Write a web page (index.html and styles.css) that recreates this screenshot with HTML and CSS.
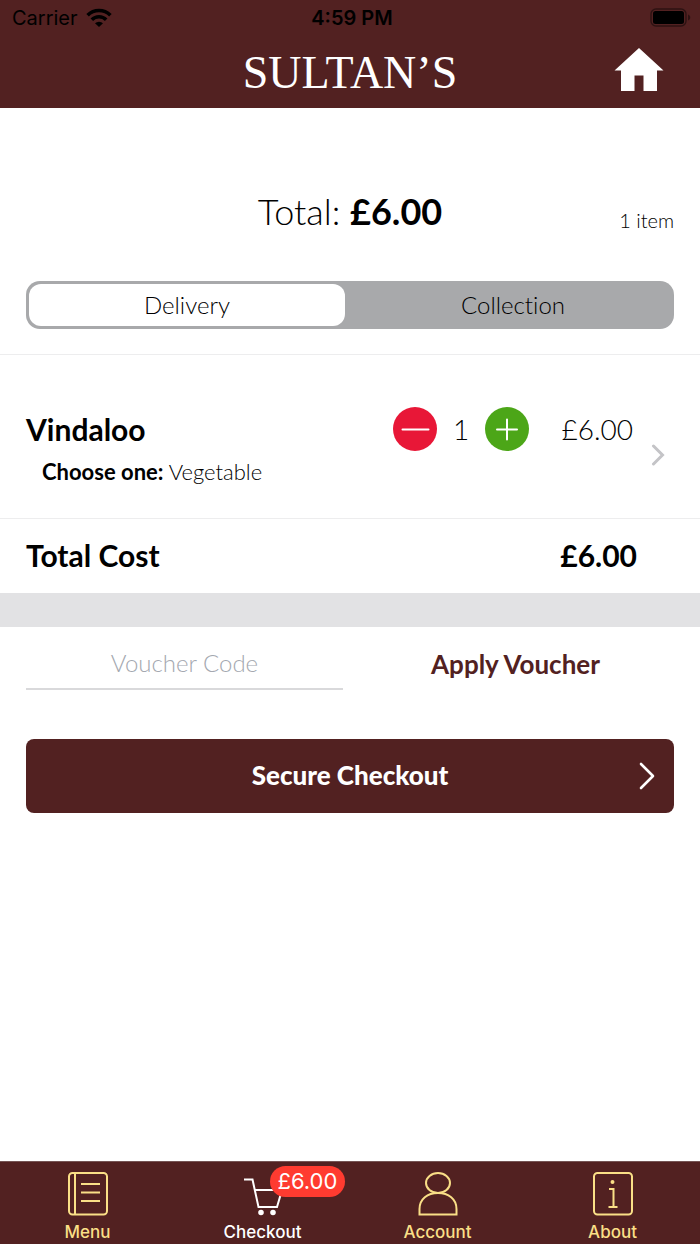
FILE: index.html
```html
<!DOCTYPE html>
<html lang="en">
<head>
<meta charset="utf-8">
<meta name="viewport" content="width=device-width, initial-scale=1">
<title>Sultan's – Checkout</title>
<link rel="stylesheet" href="styles.css">
</head>
<body class="app">
<header class="header">
  <div class="status">
    <div class="status-carrier">
      <span>Carrier</span>
      <svg width="26" height="20" viewBox="0 0 26 20" aria-hidden="true">
        <g fill="none" stroke="#000" stroke-width="3.6">
          <path d="M1.600 7.200a16.200 16.200 0 0 1 22.800 0"/>
          <path d="M5.800 11.800a10.200 10.200 0 0 1 14.400 0"/>
        </g>
        <path d="M13 19 9 15.300a5.800 5.800 0 0 1 8 0z"/>
      </svg>
    </div>
    <time class="status-time">4:59 PM</time>
    <svg class="status-battery" width="42" height="20" viewBox="0 0 42 20" aria-hidden="true">
      <rect x="1" y="1" width="35" height="17" rx="5" fill="none" stroke="#000" stroke-opacity=".45" stroke-width="1.4"/>
      <rect x="3" y="3" width="31" height="13" rx="2.5"/>
      <path d="M38 6.500c3 1 3 5 0 6z" fill-opacity=".45"/>
    </svg>
  </div>
  <div class="brand-row">
    <h1 class="brand">SULTAN’S</h1>
    <a class="home" href="#" aria-label="Home">
      <svg width="50" height="43" viewBox="0 0 50 43" aria-hidden="true"><path fill="#fff" d="M25 0 49.500 22.500H43V43H29.500V27.500H20.500V43H7V22.500H.5z"/></svg>
    </a>
  </div>
</header>
<main class="main">
  <section class="summary">
    <p class="summary-total">Total: <strong>£6.00</strong></p>
    <p class="summary-count">1 item</p>
  </section>
  <div class="segments" role="radiogroup" aria-label="Order type">
    <input class="segment-input" type="radio" name="order" id="delivery" checked>
    <label class="segment" for="delivery">Delivery</label>
    <input class="segment-input" type="radio" name="order" id="collection">
    <label class="segment" for="collection">Collection</label>
  </div>
  <section class="items">
    <article class="item">
      <h2 class="item-name">Vindaloo</h2>
      <div class="stepper">
        <button class="step step-minus" type="button" aria-label="Remove one">
          <svg width="44" height="44" viewBox="0 0 44 44" aria-hidden="true"><path d="M9.500 22.500h26"/></svg>
        </button>
        <span class="quantity">1</span>
        <button class="step step-plus" type="button" aria-label="Add one">
          <svg width="44" height="44" viewBox="0 0 44 44" aria-hidden="true"><path d="M12 22.500h20M22 12.500v20"/></svg>
        </button>
      </div>
      <span class="item-price">£6.00</span>
      <svg class="item-more" width="14" height="22" viewBox="0 0 14 22" aria-hidden="true"><path d="M2.500 2 11.500 11 2.500 20" fill="none" stroke="#c4c4c7" stroke-width="3" stroke-linecap="round"/></svg>
      <p class="item-option"><strong>Choose one:</strong> Vegetable</p>
    </article>
  </section>
  <section class="cost">
    <h2 class="cost-label">Total Cost</h2>
    <span class="cost-value">£6.00</span>
  </section>
  <form class="voucher">
    <input class="voucher-input" type="text" placeholder="Voucher Code" aria-label="Voucher Code">
    <button class="voucher-apply" type="button">Apply Voucher</button>
  </form>
  <button class="checkout" type="button">
    <span class="checkout-label">Secure Checkout</span>
    <svg width="16" height="28" viewBox="0 0 16 28" aria-hidden="true"><path d="M2 2 14 14 2 26" fill="none" stroke="#fff" stroke-width="2.600" stroke-linecap="round" stroke-linejoin="round"/></svg>
  </button>
</main>
<nav class="tabs">
  <a class="tab" href="#">
    <svg class="tab-icon" width="40" height="44" viewBox="0 0 40 44" aria-hidden="true">
      <rect x="1" y="1" width="38" height="41.500" rx="3.500"/>
      <path d="M7 1v41.500M13 12h19M13 20.500h19M13 29h19"/>
    </svg>
    <span>Menu</span>
  </a>
  <a class="tab tab-active" href="#" aria-current="page">
    <span class="tab-cart">
      <svg class="tab-icon" width="40" height="44" viewBox="0 0 40 44" aria-hidden="true">
        <path d="M1 7.500h8.500L15.500 35h18.500L39 18H12"/>
        <circle cx="18" cy="40.500" r="1.800" fill="#fff"/>
        <circle cx="30" cy="40.500" r="1.800" fill="#fff"/>
      </svg>
      <span class="badge">£6.00</span>
    </span>
    <span>Checkout</span>
  </a>
  <a class="tab" href="#">
    <svg class="tab-icon" width="40" height="44" viewBox="0 0 40 44" aria-hidden="true">
      <ellipse cx="20" cy="11" rx="12" ry="10"/>
      <path d="M1.500 42.500V37C1.500 27 9.500 21 20 21s18.500 6 18.500 16v5.500z"/>
    </svg>
    <span>Account</span>
  </a>
  <a class="tab" href="#">
    <svg class="tab-icon" width="40" height="44" viewBox="0 0 40 44" aria-hidden="true">
      <rect x="1" y="1" width="38" height="41.500" rx="3.500"/>
      <path d="M16 17h4.500v18M15.500 35h9"/>
      <circle cx="19.500" cy="10" r="1" fill="#fadf87"/>
    </svg>
    <span>About</span>
  </a>
</nav>
</body>
</html>
```

FILE: styles.css
```css
* { box-sizing: border-box; }

.app {
  margin: 0;
  min-height: 100vh;
  display: flex;
  flex-direction: column;
  background: #fff;
  color: #000;
  font-family: Lato, "Open Sans", sans-serif;
  font-size: 24px;
  font-weight: 300;
  font-variant-ligatures: none;
}

h1, h2, p { margin: 0; }
strong { font-weight: 700; }
button, input { font: inherit; }
button { border: 0; cursor: pointer; }
svg { display: block; flex: none; }

.header { background: #522121; }

.status {
  display: grid;
  grid-template-columns: 1fr auto 1fr;
  align-items: center;
  height: 36px;
  padding: 0 8px 0 12px;
  font: 400 20px/24px Inter, sans-serif;
}
.status-carrier { display: flex; align-items: center; gap: 8px; }
.status-time { font-weight: 600; }
.status-battery { justify-self: end; }

.brand-row {
  display: grid;
  grid-template-columns: 1fr auto 1fr;
  align-items: center;
  height: 72px;
  padding: 0 36px;
}
.brand {
  grid-column: 2;
  padding-top: 2px;
  color: #fff;
  font: 400 46px/60px "Liberation Serif", serif;
}
.home { justify-self: end; padding-bottom: 6px; }

.main {
  flex: 1;
  display: flex;
  flex-direction: column;
}

.summary {
  display: grid;
  grid-template-columns: 1fr auto 1fr;
  align-items: end;
  padding: 81px 26px 0;
}
.summary-total {
  grid-column: 2;
  font-size: 36px;
  line-height: 44px;
}
.summary-count {
  justify-self: end;
  font-size: 20px;
  line-height: 26px;
}

.segments {
  display: grid;
  grid-template-columns: 1fr 1fr;
  gap: 10px;
  margin: 48px 26px 25px;
  padding: 3px;
  border-radius: 14px;
  background: #a8a9ab;
}
.segment-input {
  position: absolute;
  opacity: 0;
}
.segment {
  border-radius: 12px;
  line-height: 42px;
  text-align: center;
  cursor: pointer;
}
.segment-input:checked + .segment { background: #fff; }

.items {
  padding-top: 36px;
  border-top: 1px solid #ededee;
}
.item {
  display: grid;
  grid-template-columns: 1fr auto 104px 32px;
  grid-template-rows: 44px 40px;
  align-items: center;
  padding: 16px 35px 27px 26px;
}
.item-name, .cost-label, .cost-value {
  font-size: 30px;
  line-height: 36px;
  font-weight: 700;
}
.stepper { display: flex; align-items: center; }
.quantity {
  width: 48px;
  text-align: center;
  font-size: 28px;
}
.step {
  display: block;
  padding: 0;
  border-radius: 50%;
}
.step path { stroke: #fff; stroke-width: 2; stroke-linecap: round; }
.step-minus { background: #e81737; }
.step-plus { background: #4ca618; }
.item-price { text-align: right; font-size: 28px; }
.item-more { grid-column: 4; grid-row: 1 / 3; justify-self: end; align-self: center; margin-top: 11px; }
.item-option {
  grid-row: 2;
  grid-column: 1;
  padding-left: 16px;
  font-size: 22px;
  white-space: nowrap;
}

.cost {
  display: flex;
  justify-content: space-between;
  padding: 18px 63px 20px 26px;
  border-top: 1px solid #ededee;
}

.voucher {
  display: grid;
  grid-template-columns: 1fr 1fr;
  gap: 14px;
  padding: 12px 26px 49px;
  border-top: 34px solid #e2e2e4;
}
.voucher-input {
  min-width: 0;
  height: 51px;
  padding: 0 0 2px;
  border: 0;
  border-bottom: 2px solid #d9d9db;
  background: none;
  text-align: center;
}
.voucher-input::placeholder { color: #a4a8b0; opacity: 1; }
.voucher-apply {
  padding: 0 0 2px;
  background: none;
  color: #522121;
  font-size: 26px;
  font-weight: 700;
}

.checkout {
  display: flex;
  align-items: center;
  height: 74px;
  margin: 0 26px;
  padding: 0 19px 0 35px;
  border-radius: 8px;
  background: #522121;
  color: #fff;
  font-size: 26px;
  font-weight: 900;
}
.checkout-label { flex: 1; padding-bottom: 2px; }

.tabs {
  display: grid;
  grid-template-columns: repeat(4, 1fr);
  padding-top: 10px;
  border-top: 1px solid #755454;
  background: #522121;
}
.tab {
  display: flex;
  flex-direction: column;
  align-items: center;
  gap: 4px;
  color: #fadf87;
  font: 500 17px/24px Inter, sans-serif;
  text-decoration: none;
}
.tab-active { color: #fff; }
.tab-icon { fill: none; stroke: currentColor; stroke-width: 2; }
.tab-cart { position: relative; }
.badge {
  position: absolute;
  left: 27px;
  top: -6px;
  padding: 0 8px;
  border-radius: 16px;
  background: #ff3b30;
  color: #fff;
  font-size: 22px;
  font-weight: 400;
  line-height: 31px;
}
```
